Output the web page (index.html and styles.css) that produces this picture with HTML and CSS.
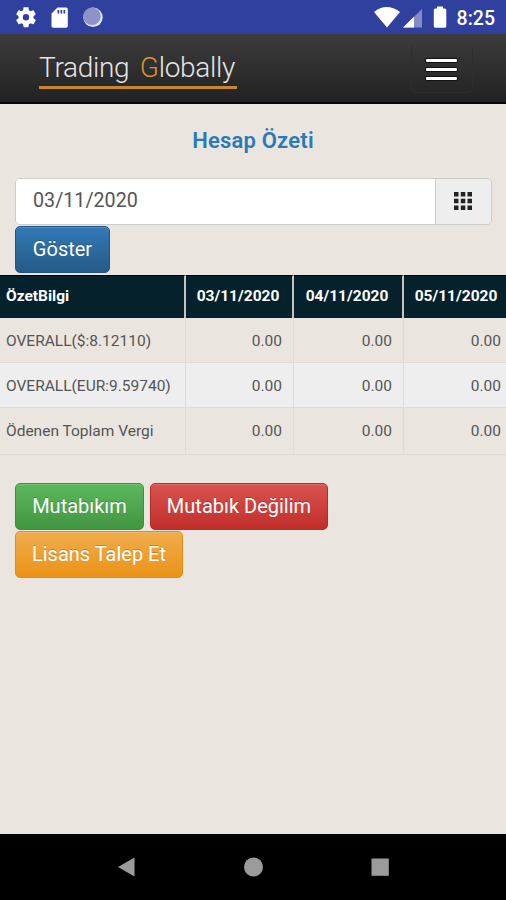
FILE: index.html
```
<!DOCTYPE html>
<html lang="tr">
<head>
    <meta charset="UTF-8">
    <meta name="viewport" content="width=device-width, initial-scale=1.0">
    <title>Hesap Özeti</title>
    <link rel="stylesheet" href="styles.css">
</head>
<body>
    <div class="status-bar">
        <svg class="status-left" width="110" height="34" viewBox="0 0 110 34">
            <g transform="translate(14 5.200)" fill="#fff">
                <path d="M19.43 12.98c.04-.32.07-.64.07-.98s-.03-.66-.07-.98l2.11-1.65c.19-.15.24-.42.12-.64l-2-3.46c-.12-.22-.39-.3-.61-.22l-2.49 1c-.52-.4-1.08-.73-1.69-.98l-.38-2.65C14.46 2.18 14.25 2 14 2h-4c-.25 0-.46.18-.49.42l-.38 2.65c-.61.25-1.17.59-1.69.98l-2.49-1c-.23-.09-.49 0-.61.22l-2 3.46c-.13.22-.07.49.12.64l2.11 1.65c-.04.32-.07.65-.07.98s.03.66.07.98l-2.11 1.65c-.19.15-.24.42-.12.64l2 3.46c.12.22.39.3.61.22l2.49-1c.52.4 1.08.73 1.69.98l.38 2.65c.03.24.24.42.49.42h4c.25 0 .46-.18.49-.42l.38-2.65c.61-.25 1.17-.59 1.69-.98l2.49 1c.23.09.49 0 .61-.22l2-3.46c.12-.22.07-.49-.12-.64l-2.11-1.65zM12 15.200a3.200 3.200 0 1 1 0-6.400 3.200 3.200 0 0 1 0 6.400z"/>
            </g>
            <path fill="#fff" d="M57.500 7.500H66a1.800 1.800 0 0 1 1.800 1.800V26a1.800 1.800 0 0 1-1.800 1.800H53.300A1.800 1.800 0 0 1 51.500 26V13.500z"/>
            <path fill="#30409f" d="M57.500 10h1.700v3.500h-1.700zM60.500 10h1.700v3.500h-1.700zM63.500 10h1.700v3.500h-1.700z"/>
            <circle cx="93" cy="17.300" r="9.700" fill="#dfe3f5"/>
            <circle cx="92" cy="16.300" r="8.700" fill="#8c93ca"/>
        </svg>
        <div class="status-right">
            <svg width="76" height="34" viewBox="372 0 76 34">
                <path fill="#fff" d="M374 12q12.500-10 26 0L387 27.500z"/>
                <path fill="#838cc5" d="M422 9v18.500h-19z"/>
                <path fill="#fff" d="M414 16.800v10.700h-11z"/>
                <path fill="#fff" d="M437 6.500h6v2h1.800q1.500 0 1.500 1.500v16q0 1.800-1.500 1.800h-9.500q-1.500 0-1.500-1.800V10q0-1.500 1.500-1.500h1.700z"/>
            </svg>
            <span class="clock">8:25</span>
        </div>
    </div>

    <div class="navbar">
        <div class="logo">Trading <span>G</span>lobally</div>
        <button class="navbar-toggle">
            <span class="icon-bar"></span>
            <span class="icon-bar"></span>
            <span class="icon-bar"></span>
        </button>
    </div>

    <div class="content">
        <h1>Hesap Özeti</h1>
        <div class="input-group">
            <input class="form-control" type="text" value="03/11/2020">
            <span class="input-addon">
                <svg width="18" height="18" viewBox="0 0 18 18" fill="#222">
                    <path d="M0 0h4.500v4.500H0zM6.800 0h4.500v4.500H6.800zM13.500 0H18v4.500h-4.500zM0 6.800h4.500v4.500H0zM6.800 6.800h4.500v4.500H6.800zM13.500 6.800H18v4.500h-4.500zM0 13.500h4.500V18H0zM6.800 13.500h4.500V18H6.800zM13.500 13.500H18V18h-4.500z"/>
                </svg>
            </span>
        </div>
        <button class="btn btn-primary">Göster</button>

        <table>
            <thead>
                <tr>
                    <th>ÖzetBilgi</th>
                    <th class="date">03/11/2020</th>
                    <th class="date">04/11/2020</th>
                    <th class="date">05/11/2020</th>
                </tr>
            </thead>
            <tbody>
                <tr>
                    <td>OVERALL($:8.12110)</td>
                    <td class="num">0.00</td>
                    <td class="num">0.00</td>
                    <td class="num">0.00</td>
                </tr>
                <tr>
                    <td>OVERALL(EUR:9.59740)</td>
                    <td class="num">0.00</td>
                    <td class="num">0.00</td>
                    <td class="num">0.00</td>
                </tr>
                <tr>
                    <td>Ödenen Toplam Vergi</td>
                    <td class="num">0.00</td>
                    <td class="num">0.00</td>
                    <td class="num">0.00</td>
                </tr>
            </tbody>
        </table>

        <div class="actions">
            <button class="btn btn-success">Mutabıkım</button>
            <button class="btn btn-danger">Mutabık Değilim</button>
            <button class="btn btn-warning">Lisans Talep Et</button>
        </div>
    </div>

    <div class="nav-keys">
        <svg width="20" height="20" viewBox="0 0 20 20"><path fill="#9b9b9b" d="M2 10L18.500.500v19z"/></svg>
        <svg width="20" height="20" viewBox="0 0 20 20"><circle cx="10.500" cy="10" r="9.500" fill="#9b9b9b"/></svg>
        <svg width="20" height="20" viewBox="0 0 20 20"><path fill="#9b9b9b" d="M1.500 1.500h17.300v17.300H1.500z"/></svg>
    </div>
</body>
</html>
```
FILE: styles.css
```
* {
    box-sizing: border-box;
}
body {
    margin: 0;
    height: 900px;
    display: flex;
    flex-direction: column;
    overflow: hidden;
    background: #eae6df;
    color: #555;
    font-family: Roboto, Arial, sans-serif;
}
button,
input {
    font-family: inherit;
}
.status-bar {
    display: flex;
    justify-content: space-between;
    height: 34px;
    background: #30409f;
}
.status-right {
    display: flex;
    align-items: center;
    gap: 9px;
    padding-right: 11px;
}
.clock {
    color: #fff;
    font-size: 19.5px;
    font-weight: 500;
    padding-top: 3px;
}
.navbar {
    display: flex;
    justify-content: space-between;
    align-items: flex-start;
    height: 70px;
    padding: 11px 33px 0 39px;
    background: linear-gradient(#3c3c3c, #222);
    border-bottom: 2px solid #080808;
}
.logo {
    width: 198px;
    height: 44px;
    padding-top: 6px;
    border-bottom: 3px solid #c9862b;
    color: #e4e4e4;
    font-size: 28px;
    font-weight: 300;
    line-height: 34px;
    letter-spacing: -0.3px;
    word-spacing: 4px;
    white-space: nowrap;
}
.logo span {
    color: #dc932f;
}
.navbar-toggle {
    display: flex;
    flex-direction: column;
    align-items: center;
    gap: 6px;
    width: 62px;
    height: 48px;
    padding: 13px 2px 0 0;
    background: none;
    border: 1px solid #2e2e2e;
    border-top-color: transparent;
    border-radius: 5px;
}
.icon-bar {
    width: 31px;
    height: 3px;
    border-radius: 1px;
    background: #fff;
    box-shadow: 0 0 1px 1px #111;
}
.content {
    flex: 1;
}
h1 {
    margin: 0;
    padding: 23px 0 24px;
    color: #2a7ab9;
    font-size: 22px;
    font-weight: 600;
    line-height: 27px;
    letter-spacing: 0.2px;
    text-align: center;
}
.input-group {
    display: flex;
    height: 47px;
    margin: 0 14px 1px 15px;
    border: 1px solid #ccc;
    border-radius: 5px;
    overflow: hidden;
}
.form-control {
    flex: 1;
    min-width: 0;
    padding: 0 17px 2px;
    border: 0;
    background: #fff;
    color: #555;
    font-size: 19.7px;
}
.input-addon {
    display: flex;
    align-items: center;
    justify-content: center;
    width: 56px;
    padding: 0 2px 2px 0;
    border-left: 1px solid #ccc;
    background: #eee;
}
.btn {
    height: 47px;
    padding: 0 0 2px;
    border: 1px solid;
    border-radius: 5px;
    color: #fff;
    font-size: 20px;
    white-space: nowrap;
    text-shadow: 0 -1px 0 rgba(0, 0, 0, 0.2);
    box-shadow: inset 0 1px 0 rgba(255, 255, 255, 0.15);
}
.btn-primary {
    display: block;
    width: 95px;
    margin: 0 0 2px 15px;
    background: linear-gradient(#337ab7, #265a88);
    border-color: #245580;
}
.btn-success {
    width: 129px;
    background: linear-gradient(#5cb85c, #419641);
    border-color: #3e8f3e;
}
.btn-danger {
    width: 178px;
    background: linear-gradient(#d9534f, #c12e2a);
    border-color: #b92c28;
}
.btn-warning {
    width: 168px;
    background: linear-gradient(#f0ad4e, #eb9316);
    border-color: #e38d13;
}
table {
    width: 506px;
    table-layout: fixed;
    border-collapse: separate;
    border-spacing: 0;
    font-size: 15.5px;
}
th {
    height: 43px;
    padding: 0 6px 2px;
    background: #05222c;
    border-top: 1px solid #000;
    border-right: 2px solid #c5c5c3;
    color: #fff;
    font-weight: 700;
    text-align: left;
}
th:first-child {
    width: 186px;
}
th:nth-child(2) {
    width: 108px;
}
th:nth-child(3) {
    width: 110px;
}
th.date {
    padding: 0 2px 2px 0;
    text-align: center;
}
th.date:last-child {
    padding: 0 0 2px 2px;
}
td {
    height: 45px;
    padding: 2px 6px 0;
    border-right: 1px solid #e0dcd5;
    border-bottom: 1px solid #e0dcd5;
}
th:last-child,
td:last-child {
    border-right: 0;
}
tbody tr:nth-child(2) {
    background: #eee;
}
tbody tr:last-child td {
    height: 47px;
    padding-bottom: 2px;
}
.num {
    padding-right: 11px;
    text-align: right;
}
.num:last-child {
    padding-right: 5px;
}
.actions {
    display: flex;
    flex-wrap: wrap;
    gap: 1px 6px;
    padding: 28px 15px 0;
}
.nav-keys {
    display: flex;
    justify-content: center;
    align-items: center;
    gap: 107px;
    height: 66px;
    background: #000;
}
```
